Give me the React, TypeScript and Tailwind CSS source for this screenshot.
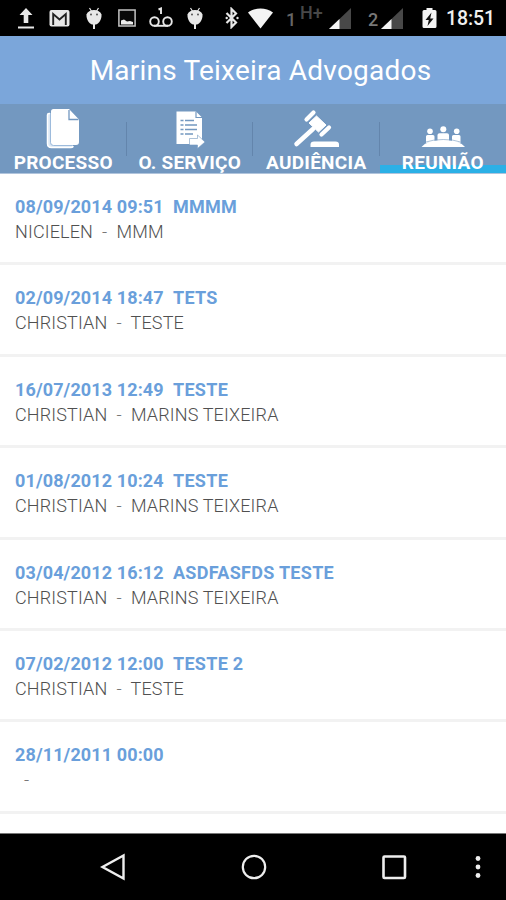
import { useState } from 'react';

interface Meeting {
  id: number;
  date: string;
  subject: string;
  client: string;
  place: string;
}

const meetings: Meeting[] = [
  { id: 1, date: '08/09/2014 09:51', subject: 'MMMM', client: 'NICIELEN', place: 'MMM' },
  { id: 2, date: '02/09/2014 18:47', subject: 'TETS', client: 'CHRISTIAN', place: 'TESTE' },
  { id: 3, date: '16/07/2013 12:49', subject: 'TESTE', client: 'CHRISTIAN', place: 'MARINS TEIXEIRA' },
  { id: 4, date: '01/08/2012 10:24', subject: 'TESTE', client: 'CHRISTIAN', place: 'MARINS TEIXEIRA' },
  { id: 5, date: '03/04/2012 16:12', subject: 'ASDFASFDS TESTE', client: 'CHRISTIAN', place: 'MARINS TEIXEIRA' },
  { id: 6, date: '07/02/2012 12:00', subject: 'TESTE 2', client: 'CHRISTIAN', place: 'TESTE' },
  { id: 7, date: '28/11/2011 00:00', subject: '', client: '', place: '' },
];

function AndroidIcon({ className }: { className: string }) {
  return (
    <svg width="16" height="22" viewBox="0 0 16 22" className={className}>
      <path d="M3.5 1l2 3.2M12.5 1l-2 3.2" stroke="#e8e8e8" strokeWidth="1.2" />
      <path d="M.5 7.500C1.500 4.600 4.500 3 8 3s6.500 1.600 7.500 4.500c.3 5-2.500 9-5.500 10H6C3 16.500.2 12.500.5 7.500z" fill="#e8e8e8" />
      <path d="M8 16v6" stroke="#e8e8e8" strokeWidth="2" />
      <circle cx="5" cy="7.500" r=".9" fill="#444" />
      <circle cx="11" cy="7.500" r=".9" fill="#444" />
    </svg>
  );
}

function SignalIcon({ className }: { className: string }) {
  return (
    <svg width="22" height="21" viewBox="0 0 22 21" className={className}>
      <path d="M22 0v21H0z" fill="#484848" />
      <path d="M10.500 11v10H0z" fill="#f4f4f4" />
    </svg>
  );
}

function StatusBar() {
  return (
    <div className="flex h-9 items-start bg-black pt-[7px] text-white">
      <svg width="16" height="22" viewBox="0 0 16 22" className="ml-[18px] shrink-0">
        <path d="M8 1l6.500 7H10.300v8H5.700V8H1.500z" fill="#e8e8e8" />
        <path d="M0 19.500h16v2H0z" fill="#e8e8e8" />
      </svg>
      <svg width="21" height="22" viewBox="0 0 21 22" className="ml-[15px] shrink-0">
        <rect x=".5" y="3" width="20" height="16.500" rx="2" fill="#e8e8e8" />
        <path d="M4.200 18V7l6.300 5.500L16.800 7v11" fill="none" stroke="#222" strokeWidth="1.900" />
      </svg>
      <AndroidIcon className="ml-[16px] shrink-0" />
      <svg width="18" height="22" viewBox="0 0 18 22" className="ml-[16px] shrink-0">
        <rect x=".9" y="3" width="16.200" height="16" fill="#080808" stroke="#c4c4c4" strokeWidth="1.500" />
        <path d="M3 17.500v-4l3-1 3 2 3-.5 3 1v2.500z" fill="#eee" />
      </svg>
      <svg width="24" height="22" viewBox="0 0 24 22" className="ml-[13px] shrink-0">
        <path d="M9.500 2.500l2.500-1V7" fill="none" stroke="#e8e8e8" strokeWidth="1.900" />
        <circle cx="5.500" cy="14.500" r="4.300" fill="none" stroke="#e8e8e8" strokeWidth="1.900" />
        <circle cx="18.500" cy="14.500" r="4.300" fill="none" stroke="#e8e8e8" strokeWidth="1.900" />
        <path d="M5 18.800h14" stroke="#e8e8e8" strokeWidth="1.900" />
      </svg>
      <AndroidIcon className="ml-[14px] shrink-0" />
      <svg width="14" height="22" viewBox="0 0 14 22" className="ml-[22px] shrink-0">
        <path d="M1.500 6l9.500 9.500-4.500 4.500V2L11 6.500 1.500 16" fill="none" stroke="#e8e8e8" strokeWidth="2.200" />
        <circle cx="1.700" cy="11" r="1.200" fill="#e8e8e8" />
        <circle cx="12.500" cy="11" r="1.200" fill="#e8e8e8" />
      </svg>
      <svg width="25" height="22" viewBox="0 0 25 22" className="ml-[9px] shrink-0">
        <path d="M0 5.500C7 .2 18 .2 25 5.500L12.500 21.500z" fill="#f4f4f4" />
      </svg>
      <span className="ml-[13px] w-[12px] pt-[3px] text-[18px] leading-[20px] font-medium text-[#666]">1</span>
      <span className="ml-[2px] w-[28px] -mt-[4px] text-[18px] leading-[20px] font-medium text-[#484848]">H+</span>
      <SignalIcon className="ml-px mt-px shrink-0" />
      <span className="ml-[17px] w-[12px] pt-[3px] text-[18px] leading-[20px] font-medium text-[#777]">2</span>
      <SignalIcon className="ml-px mt-px shrink-0" />
      <svg width="15" height="22" viewBox="0 0 15 22" className="ml-[19px] shrink-0">
        <path d="M4.500 1h6v2H13a1.500 1.500 0 0 1 1.500 1.500v15A1.500 1.500 0 0 1 13 21H2A1.500 1.500 0 0 1 .5 19.500v-15A1.500 1.500 0 0 1 2 3h2.500z" fill="#f4f4f4" />
        <path d="M9.500 5.500l-6 7.500h3.300l-1.300 6 6-7.500H8.200z" fill="#111" />
      </svg>
      <span className="ml-[9px] pt-[2px] text-[19.500px] leading-[20px] font-medium tracking-[-0.1px] text-[#f0f0f0]">18:51</span>
    </div>
  );
}

const tabs = [
  {
    label: 'PROCESSO',
    icon: (
      <svg width="34" height="42" viewBox="0 0 34 42">
        <path d="M4 6.500H3Q1.500 6.500 1.500 8v28.500Q1.500 40.500 5.500 40.500H25q2 0 2-1.500" fill="#dce8f5" stroke="#fff" strokeWidth="1.500" />
        <path d="M7.500 2h15.500L33 12.500v22.500a3 3 0 0 1-3 3H8a3 3 0 0 1-3-3V4.500A2.500 2.500 0 0 1 7.500 2z" fill="#fff" />
        <path d="M23 3v9.500h9.500" fill="none" stroke="#7398c0" strokeWidth="1.300" />
        <path d="M4.500 6v29.500q0 3 3 3h19" fill="none" stroke="#9dbbdc" strokeWidth="1" />
      </svg>
    ),
  },
  {
    label: 'O. SERVIÇO',
    icon: (
      <svg width="30" height="42" viewBox="0 0 30 42">
        <path d="M1.500 4.500h19.500l6 6V37H1.500z" fill="#fff" />
        <path d="M21 4.500v6h6" fill="none" stroke="#7398c0" strokeWidth="1.200" />
        <path d="M5.500 13.500h3M5.500 18h3M5.500 22.500h3M5.500 27h3M10 13.500h9M10 18h12M10 22.500h12M10 27h8" stroke="#7398c0" strokeWidth="1.600" />
        <path d="M14.500 31.500h8v-3.500l7.500 7-7.500 6.500V38h-8z" fill="#fff" stroke="#7398c0" strokeWidth=".6" />
      </svg>
    ),
  },
  {
    label: 'AUDIÊNCIA',
    icon: (
      <svg width="46" height="42" viewBox="0 0 46 42">
        <path d="M3.500 37L20 22" stroke="#fff" strokeWidth="4.500" strokeLinecap="round" />
        <path d="M23.500 9L33 18 25.500 25 16 16z" fill="#fff" stroke="#fff" strokeWidth="1" />
        <path d="M13.500 12.500L20.500 5.500M28.500 27.500L36 20.500" stroke="#fff" strokeWidth="4.200" strokeLinecap="round" />
        <path d="M17.500 40v-2.500q0-3 3.500-3h21.500q3.500 0 3.500 3V40z" fill="#fff" />
      </svg>
    ),
  },
  {
    label: 'REUNIÃO',
    icon: (
      <svg width="44" height="42" viewBox="0 0 44 42">
        <circle cx="22.300" cy="22.200" r="3" fill="#fff" />
        <circle cx="9" cy="24.300" r="2.800" fill="#fff" />
        <circle cx="35.700" cy="24.300" r="2.800" fill="#fff" />
        <path d="M16.500 34v-6q0-1.700 2-1.700H26q2 0 2 1.700v6zM5 36v-6.500q0-1.500 1.500-1.500h5.500q1.500 0 1.500 1.500V35zM31 35v-5.500q0-1.500 1.500-1.500H38q1.500 0 1.500 1.500V36z" fill="#fff" />
        <path d="M.5 40Q6 33 22.300 33T44 40z" fill="#fff" />
        <path d="M5 35Q12 32.500 22.300 32.500T39.500 35" fill="none" stroke="#7398c0" strokeWidth=".6" />
      </svg>
    ),
  },
];

export default function App() {
  const [activeTab, setActiveTab] = useState('REUNIÃO');

  return (
    <div className="flex h-[900px] w-[506px] flex-col overflow-hidden bg-white font-[Roboto,sans-serif]">
      <StatusBar />

      {/* Title */}
      <header className="flex h-[68px] items-center justify-center bg-[#7ba6da] pt-px pl-[15px]">
        <h1 className="text-[28px] leading-[36px] tracking-[0.22px] whitespace-nowrap text-white">Marins Teixeira Advogados</h1>
      </header>

      {/* Tabs */}
      <nav className="grid h-[70px] grid-cols-4 border-b border-[#b0c4dc] bg-[#7398c0]">
        {tabs.map((tab, i) => (
          <button
            key={tab.label}
            onClick={() => setActiveTab(tab.label)}
            className={`relative flex flex-col items-center pt-[3px] text-white ${
              activeTab === tab.label ? 'bg-linear-to-t from-[#2bb0e6] from-[8px] to-transparent to-[8px]' : ''
            }`}
          >
            {tab.icon}
            <span className="mt-[4px] text-[19px] leading-[20px] font-bold tracking-[0.25px] whitespace-nowrap">{tab.label}</span>
            {i < tabs.length - 1 && <span className="absolute top-[18px] right-0 h-[34px] w-px bg-[#6385ac]" />}
          </button>
        ))}
      </nav>

      {/* Meeting list */}
      <ul className="flex-1">
        {meetings.map((m) => (
          <li key={m.id} className="h-[91.400px] border-b-[3px] border-[#f2f2f2] pt-[20px] pl-[15px] whitespace-pre">
            <p className="text-[18px] leading-[25px] font-bold tracking-[0.12px] text-[#6a9fdb]">
              {m.date}
              {'  '}
              <span className="tracking-[0.3px]">{m.subject}</span>
            </p>
            <p className="text-[18px] leading-[25px] font-light tracking-[0.15px] text-[#505050]">
              {m.client}
              <span className="text-[#777]">{'  -  '}</span>
              {m.place}
            </p>
          </li>
        ))}
      </ul>

      {/* Navigation bar */}
      <footer className="flex h-[67px] items-center border-t border-[#777] bg-black">
        <svg width="26" height="28" viewBox="0 0 26 28" className="ml-[100px]">
          <path d="M23.500 2.500v23L2.500 14z" fill="none" stroke="#eee" strokeWidth="2.400" />
        </svg>
        <svg width="26" height="26" viewBox="0 0 26 26" className="ml-[115px]">
          <circle cx="13" cy="13" r="11.200" fill="none" stroke="#eee" strokeWidth="2.200" />
        </svg>
        <svg width="26" height="26" viewBox="0 0 26 26" className="ml-[114px]">
          <rect x="2.500" y="2.500" width="21.500" height="21.500" rx="1" fill="none" stroke="#eee" strokeWidth="2.600" />
        </svg>
        <svg width="6" height="26" viewBox="0 0 6 26" className="ml-[68px]">
          <circle cx="3" cy="4.500" r="2.400" fill="#eee" />
          <circle cx="3" cy="13" r="2.400" fill="#eee" />
          <circle cx="3" cy="21.500" r="2.400" fill="#eee" />
        </svg>
      </footer>
    </div>
  );
}
